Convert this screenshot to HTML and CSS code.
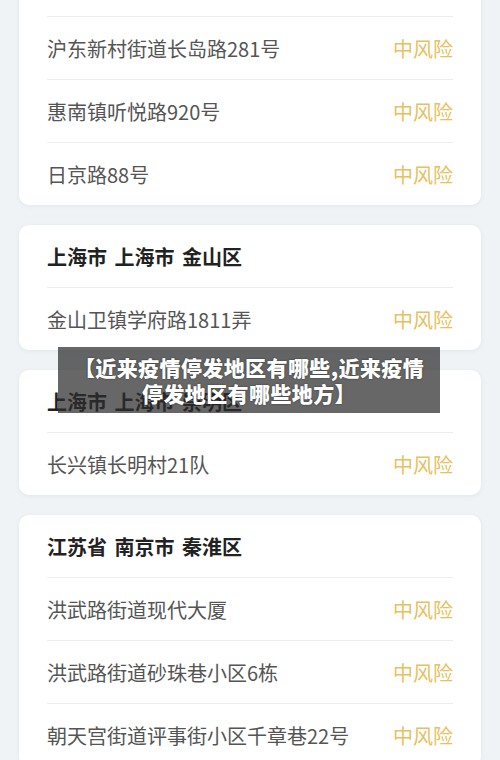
FILE: index.html
```html
<!DOCTYPE html>
<html lang="zh-CN">
<head>
<meta charset="utf-8">
<title>风险地区</title>
<link rel="stylesheet" href="styles.css">
</head>
<body>
<div class="page">
  <div class="list">
    <section class="card">
      <div class="head"></div>
      <div class="row"><span class="addr">沪东新村街道长岛路281号</span><span class="risk">中风险</span></div>
      <div class="row"><span class="addr">惠南镇听悦路920号</span><span class="risk">中风险</span></div>
      <div class="row"><span class="addr">日京路88号</span><span class="risk">中风险</span></div>
    </section>
    <section class="card">
      <div class="head">上海市 上海市 金山区</div>
      <div class="row"><span class="addr">金山卫镇学府路1811弄</span><span class="risk">中风险</span></div>
    </section>
    <section class="card">
      <div class="head">上海市 上海市 崇明区</div>
      <div class="row"><span class="addr">长兴镇长明村21队</span><span class="risk">中风险</span></div>
    </section>
    <section class="card">
      <div class="head">江苏省 南京市 秦淮区</div>
      <div class="row"><span class="addr">洪武路街道现代大厦</span><span class="risk">中风险</span></div>
      <div class="row"><span class="addr">洪武路街道砂珠巷小区6栋</span><span class="risk">中风险</span></div>
      <div class="row"><span class="addr">朝天宫街道评事街小区千章巷22号</span><span class="risk">中风险</span></div>
    </section>
  </div>
  <div class="caption">【近来疫情停发地区有哪些,近来疫情<br>停发地区有哪些地方】</div>
</div>
</body>
</html>
```

FILE: styles.css
```css
html, body {
  margin: 0;
  padding: 0;
}
body {
  background: #eff3f6;
  font-family: "Noto Sans CJK SC", "Noto Sans", sans-serif;
  overflow: hidden;
}
.page {
  position: relative;
  width: 500px;
  height: 760px;
  overflow: hidden;
}
.list {
  display: flex;
  flex-direction: column;
  gap: 20px;
  padding: 0 19px;
  margin-top: -46px;
}
.card {
  background: #ffffff;
  border-radius: 10px;
  box-shadow: 0 1px 4px rgba(160, 175, 190, 0.18);
  padding: 0 28px;
}
.head {
  height: 62px;
  display: flex;
  align-items: center;
  font-size: 20px;
  font-weight: 700;
  color: #222222;
  white-space: pre;
  word-spacing: 3px;
}
.row {
  height: 62px;
  border-top: 1px solid #eeeeee;
  display: flex;
  align-items: center;
  justify-content: space-between;
  font-size: 20px;
  white-space: nowrap;
}
.addr {
  color: #555555;
}
.risk {
  color: #e6c160;
}
.caption {
  position: absolute;
  left: 58px;
  top: 347px;
  width: 382px;
  height: 66px;
  box-sizing: border-box;
  background: rgba(45, 45, 45, 0.72);
  color: #ffffff;
  font-size: 21px;
  font-weight: 900;
  letter-spacing: 0.4px;
  line-height: 26px;
  text-align: center;
  padding-top: 7px;
  white-space: nowrap;
  text-shadow: 0 0 2px rgba(0, 0, 0, 0.5);
}
```
